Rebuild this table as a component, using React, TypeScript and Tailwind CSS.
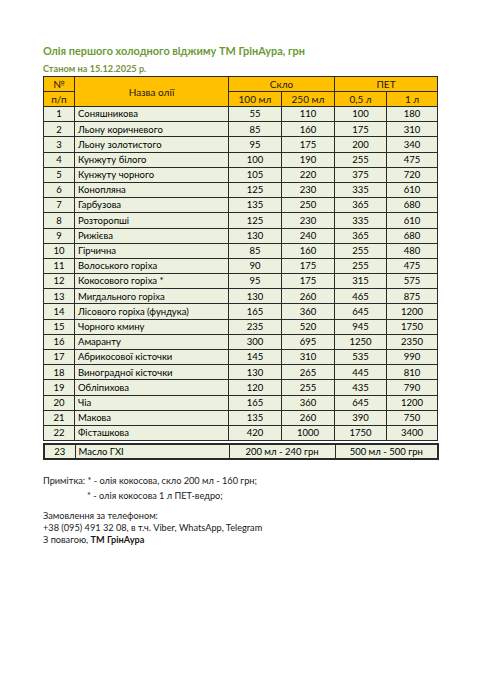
const oils: [number, string, number, number, number, number][] = [
  [1, "Соняшникова", 55, 110, 100, 180],
  [2, "Льону коричневого", 85, 160, 175, 310],
  [3, "Льону золотистого", 95, 175, 200, 340],
  [4, "Кунжуту білого", 100, 190, 255, 475],
  [5, "Кунжуту чорного", 105, 220, 375, 720],
  [6, "Конопляна", 125, 230, 335, 610],
  [7, "Гарбузова", 135, 250, 365, 680],
  [8, "Розторопші", 125, 230, 335, 610],
  [9, "Рижієва", 130, 240, 365, 680],
  [10, "Гірчична", 85, 160, 255, 480],
  [11, "Волоського горіха", 90, 175, 255, 475],
  [12, "Кокосового горіха *", 95, 175, 315, 575],
  [13, "Мигдального горіха", 130, 260, 465, 875],
  [14, "Лісового горіха (фундука)", 165, 360, 645, 1200],
  [15, "Чорного кмину", 235, 520, 945, 1750],
  [16, "Амаранту", 300, 695, 1250, 2350],
  [17, "Абрикосової кісточки", 145, 310, 535, 990],
  [18, "Виноградної кісточки", 130, 265, 445, 810],
  [19, "Обліпихова", 120, 255, 435, 790],
  [20, "Чіа", 165, 360, 645, 1200],
  [21, "Макова", 135, 260, 390, 750],
  [22, "Фісташкова", 420, 1000, 1750, 3400],
];

const cell = "border border-[#2a2a2a] h-[15px] p-0 leading-none";
const row = "border border-[#2a2a2a] h-[15.2px] p-0 leading-none";

const App = () => {
  return (
    <div className="min-h-[699px] w-[494px] bg-white pl-[43px] pt-[44px] text-black font-['Lato','Liberation_Sans',sans-serif]">
      <h1 className="text-[10.9px] font-bold leading-[13px] text-[#6b9a35]">
        Олія першого холодного віджиму ТМ ГрінАура, грн
      </h1>
      <div className="mt-[6px] text-[9.2px] font-bold leading-[11px] text-[#76933c]">Станом на 15.12.2025 р.</div>

      {/* main price table */}
      <table className="mt-[2px] w-[394px] table-fixed border-collapse text-[9.5px]">
        <colgroup>
          <col className="w-[31px]" />
          <col className="w-[154px]" />
          <col className="w-[53px]" />
          <col className="w-[53px]" />
          <col className="w-[52px]" />
          <col className="w-[51px]" />
        </colgroup>
        <thead className="bg-[#ffc000] text-[10px] text-[#1a1a1a]">
          <tr>
            <th className={`${cell} font-normal`}>№</th>
            <th rowSpan={2} className={`${cell} font-normal`}>Назва олії</th>
            <th colSpan={2} className={`${cell} font-normal`}>Скло</th>
            <th colSpan={2} className={`${cell} font-normal`}>ПЕТ</th>
          </tr>
          <tr>
            <th className={`${cell} font-normal`}>п/п</th>
            <th className={`${cell} font-normal`}>100 мл</th>
            <th className={`${cell} font-normal`}>250 мл</th>
            <th className={`${cell} font-normal`}>0,5 л</th>
            <th className={`${cell} font-normal`}>1 л</th>
          </tr>
        </thead>
        <tbody className="bg-[#ebf1de]">
          {oils.map(([n, name, a, b, c, d]) => (
            <tr key={n}>
              <td className={`${row} text-center`}>{n}</td>
              <td className={`${row} pl-[3px]`}>{name}</td>
              <td className={`${row} text-center`}>{a}</td>
              <td className={`${row} text-center`}>{b}</td>
              <td className={`${row} text-center`}>{c}</td>
              <td className={`${row} text-center`}>{d}</td>
            </tr>
          ))}
        </tbody>
      </table>

      <table className="mt-[2px] w-[394px] table-fixed border-collapse border-2 border-[#2a2a2a] bg-[#ebf1de] text-[9.5px]">
        <colgroup>
          <col className="w-[31px]" />
          <col className="w-[154px]" />
          <col className="w-[106px]" />
          <col className="w-[103px]" />
        </colgroup>
        <tbody>
          <tr>
            <td className={`${cell} text-center`}>23</td>
            <td className={`${cell} pl-[3px]`}>Масло ГХІ</td>
            <td className={`${cell} text-center`}>200 мл - 240 грн</td>
            <td className={`${cell} text-center`}>500 мл - 500 грн</td>
          </tr>
        </tbody>
      </table>

      <div className="mt-[15px] text-[9.2px] leading-[12px] text-[#1a1a1a]">
        <p>Примітка: * - олія кокосова, скло 200 мл - 160 грн;</p>
        <p className="mt-[3px] pl-[44px]">* - олія кокосова 1 л ПЕТ-ведро;</p>
        <p className="mt-[8px]">Замовлення за телефоном:</p>
        <p>+38 (095) 491 32 08, в т.ч. Viber, WhatsApp, Telegram</p>
        <p>
          З повагою, <span className="font-bold">ТМ ГрінАура</span>
        </p>
      </div>
    </div>
  );
};

export default App;
